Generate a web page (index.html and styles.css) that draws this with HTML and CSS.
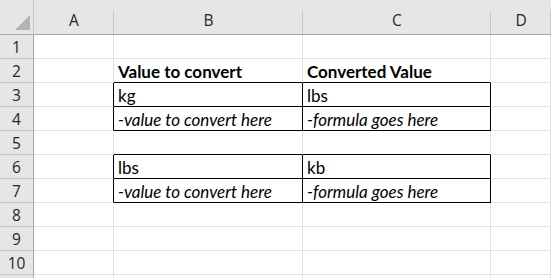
FILE: index.html
```html
<!DOCTYPE html>
<html>
<head>
<meta charset="utf-8">
<link rel="stylesheet" href="styles.css">
</head>
<body>
<div class="sheet">
  <div class="corner"><span class="tri"></span></div>
  <div class="ch">A</div>
  <div class="ch">B</div>
  <div class="ch">C</div>
  <div class="ch ch-last">D</div>

  <div class="rh">1</div>
  <div class="c"></div><div class="c"></div><div class="c"></div><div class="c"></div>

  <div class="rh">2</div>
  <div class="c"></div><div class="c b bb">Value to convert</div><div class="c b bb">Converted Value</div><div class="c"></div>

  <div class="rh">3</div>
  <div class="c br"></div><div class="c bx">kg</div><div class="c bx">lbs</div><div class="c"></div>

  <div class="rh">4</div>
  <div class="c br"></div><div class="c bx i">-value to convert here</div><div class="c bx i">-formula goes here</div><div class="c"></div>

  <div class="rh">5</div>
  <div class="c"></div><div class="c bb"></div><div class="c bb"></div><div class="c"></div>

  <div class="rh">6</div>
  <div class="c br"></div><div class="c bx">lbs</div><div class="c bx">kb</div><div class="c"></div>

  <div class="rh">7</div>
  <div class="c br"></div><div class="c bx i">-value to convert here</div><div class="c bx i">-formula goes here</div><div class="c"></div>

  <div class="rh">8</div>
  <div class="c"></div><div class="c"></div><div class="c"></div><div class="c"></div>

  <div class="rh">9</div>
  <div class="c"></div><div class="c"></div><div class="c"></div><div class="c"></div>

  <div class="rh">10</div>
  <div class="c"></div><div class="c"></div><div class="c"></div><div class="c"></div>

  <div class="rh"></div>
  <div class="c"></div><div class="c"></div><div class="c"></div><div class="c"></div>
</div>
</body>
</html>
```
FILE: styles.css
```css
html, body {
  margin: 0;
  padding: 0;
  background: #ffffff;
  overflow: hidden;
}
.sheet {
  width: 551px;
  height: 278px;
  display: grid;
  grid-template-columns: 34px 80px 189px 188px 1fr;
  grid-template-rows: 35px repeat(11, 24px);
  overflow: hidden;
  font-family: Lato, "Open Sans", sans-serif;
}
.corner {
  background: #e6e6e6;
  border-right: 1px solid #c6c6c6;
  border-bottom: 1px solid #a6a6a6;
  box-sizing: border-box;
  display: flex;
  justify-content: flex-end;
  align-items: flex-end;
  padding: 0 3px 4px 0;
}
.tri {
  width: 0;
  height: 0;
  border-left: 15px solid transparent;
  border-bottom: 15px solid #b4b4b4;
}
.ch {
  background: #e6e6e6;
  border-bottom: 1px solid #a6a6a6;
  box-sizing: border-box;
  display: flex;
  align-items: flex-end;
  justify-content: center;
  padding-bottom: 3px;
  font-family: "Open Sans", sans-serif;
  font-size: 15.5px;
  color: #262626;
  background-image: linear-gradient(#c6c6c6, #c6c6c6);
  background-size: 1px 23px;
  background-position: right bottom;
  background-repeat: no-repeat;
}
.rh {
  background: #e6e6e6;
  border-right: 1px solid #a6a6a6;
  border-bottom: 1px solid #c6c6c6;
  box-sizing: border-box;
  display: flex;
  align-items: center;
  justify-content: center;
  font-family: "Open Sans", sans-serif;
  font-size: 15.5px;
  color: #262626;
  padding-top: 1px;
}
.c {
  border-right: 1px solid #e1e1e1;
  border-bottom: 1px solid #e1e1e1;
  box-sizing: border-box;
  display: flex;
  align-items: flex-end;
  padding: 0 0 0 4px;
  font-size: 17px;
  line-height: 21px;
  color: #000;
  white-space: nowrap;
}
.b { font-weight: bold; }
.i { font-style: italic; }
.bb { border-bottom-color: #000; }
.br { border-right-color: #000; }
.bx { border-right-color: #000; border-bottom-color: #000; }
```
